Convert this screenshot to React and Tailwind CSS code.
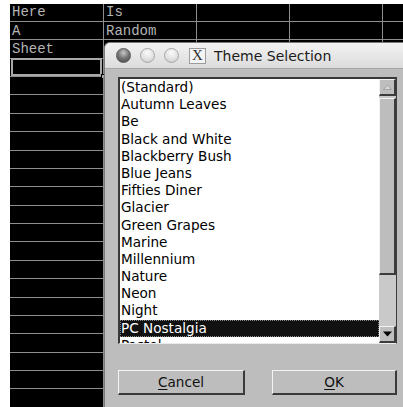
import React from 'react';

const cells = [
  ['Here', 'Is'],
  ['A', 'Random'],
  ['Sheet', ''],
];

const themes = [
  '(Standard)',
  'Autumn Leaves',
  'Be',
  'Black and White',
  'Blackberry Bush',
  'Blue Jeans',
  'Fifties Diner',
  'Glacier',
  'Green Grapes',
  'Marine',
  'Millennium',
  'Nature',
  'Neon',
  'Night',
  'PC Nostalgia',
  'Pastel',
];

const ROWS = 22;

function Sheet() {
  return (
    <div className="pl-[10px] pt-[3.5px] bg-white">
      <div className="bg-black">
        {Array.from({ length: ROWS }).map((_, r) => (
          <div key={r} className="flex h-[18.38px] border-b border-[#8e8e8e]">
            {[94, 93, 93, 93].map((w, c) => (
              <div
                key={c}
                style={{ width: w }}
                className="relative flex items-center border-r border-[#8e8e8e] pl-[2px] font-['Liberation_Mono',monospace] text-[14px] leading-none text-[#b4b4b4]"
              >
                {cells[r]?.[c] || ''}
                {r === 3 && c === 0 && (
                  <>
                    <div className="absolute inset-x-[1px] -top-[1px] bottom-0 border-2 border-[#a8a8a8]" />
                    <div className="absolute -right-[3px] -bottom-[3px] w-[5px] h-[5px] bg-[#a8a8a8] border border-black" />
                  </>
                )}
              </div>
            ))}
            <div className="flex-1" />
          </div>
        ))}
      </div>
    </div>
  );
}

function TrafficLight({ active }) {
  return (
    <div
      className={
        active
          ? 'w-[15px] h-[15px] rounded-full border border-[#5a5a5a] bg-[radial-gradient(circle_at_50%_30%,#c8c8c8_0%,#7a7a7a_45%,#404040_100%)]'
          : 'w-[15px] h-[15px] rounded-full border border-[#a8a8a8] bg-[radial-gradient(circle_at_50%_30%,#fafafa_0%,#e2e2e2_55%,#c4c4c4_100%)]'
      }
    />
  );
}

function ArrowButton({ up }) {
  return (
    <div className="h-[17px] flex items-center justify-center bg-[#bebebe] border-t border-l border-[#f2f2f2] border-r-2 border-b-2 border-r-[#3c3c3c] border-b-[#3c3c3c]">
      {up ? (
        <svg width="9" height="6" viewBox="0 0 9 6">
          <path d="M0.5 5.5 L4.5 1 L8.5 5.5 Z" fill="#d6d6d6" stroke="#9a9a9a" strokeWidth="0.8" />
        </svg>
      ) : (
        <svg width="9" height="6" viewBox="0 0 9 6">
          <path d="M0 0.5 L9 0.5 L4.5 5.5 Z" fill="#000" />
        </svg>
      )}
    </div>
  );
}

function ThemeDialog() {
  return (
    <div className="absolute left-[104px] top-[42px] w-[320px] h-[380px] rounded-t-[6px] border-l border-t border-[#7a7a7a] bg-[#bdbdbd] overflow-hidden font-['DejaVu_Sans',sans-serif]">
      {/* title bar */}
      <div className="h-[26px] flex items-center pl-[11px] bg-[linear-gradient(#f2f2f2,#dcdcdc)] border-b border-[#a6a6a6]">
        <div className="flex gap-[9px]">
          <TrafficLight active />
          <TrafficLight />
          <TrafficLight />
        </div>
        <div className="ml-[10px] w-[17px] h-[16px] flex items-center justify-center bg-[#f4f4f4] border border-[#9c9c9c] font-['Liberation_Serif',serif] text-[15px] leading-none text-[#333]">
          X
        </div>
        <span className="ml-[8px] text-[14px] text-[#1c1c1c] leading-none">Theme Selection</span>
      </div>

      {/* body */}
      <div className="pl-[13px] pt-[8px]">
        <div className="w-[279px] h-[267px] flex border-t-2 border-l-2 border-[#383838] border-b border-r border-b-[#ececec] border-r-[#3c3c3c]">
          <div className="flex-1 bg-white overflow-hidden text-[13.6px] text-black">
            {themes.map((t) => (
              <div
                key={t}
                className={
                  t === 'PC Nostalgia'
                    ? 'h-[17.2px] leading-[17.2px] pl-[1px] bg-[#111] text-white outline-1 outline-dotted outline-offset-[-1px] outline-[#888]'
                    : 'h-[17.2px] leading-[17.2px] pl-[1px]'
                }
              >
                {t}
              </div>
            ))}
          </div>
          <div className="w-[17px] flex flex-col bg-[#c9c9c9]">
            <ArrowButton up />
            <div className="mt-[2px] h-[177px] bg-[#bdbdbd] border-t border-l border-[#f2f2f2] border-r-2 border-b-2 border-r-[#3c3c3c] border-b-[#3c3c3c]" />
            <div className="flex-1" />
            <ArrowButton />
          </div>
        </div>

        {/* action buttons */}
        <div className="flex gap-[27px] mt-[26px] text-[13.6px] text-[#111]">
          <button className="w-[127px] h-[25px] flex items-center justify-center bg-[#bdbdbd] border-t border-l border-[#f4f4f4] border-r-2 border-b-2 border-r-[#3a3a3a] border-b-[#3a3a3a]">
            <span>
              <span className="underline underline-offset-2">C</span>ancel
            </span>
          </button>
          <button className="w-[125px] h-[25px] flex items-center justify-center bg-[#bdbdbd] border-t border-l border-[#f4f4f4] border-r-2 border-b-2 border-r-[#3a3a3a] border-b-[#3a3a3a]">
            <span>
              <span className="underline underline-offset-2">O</span>K
            </span>
          </button>
        </div>
      </div>
    </div>
  );
}

export default function App() {
  return (
    <div className="relative w-[403px] h-[407px] overflow-hidden bg-white">
      <Sheet />
      <ThemeDialog />
    </div>
  );
}
